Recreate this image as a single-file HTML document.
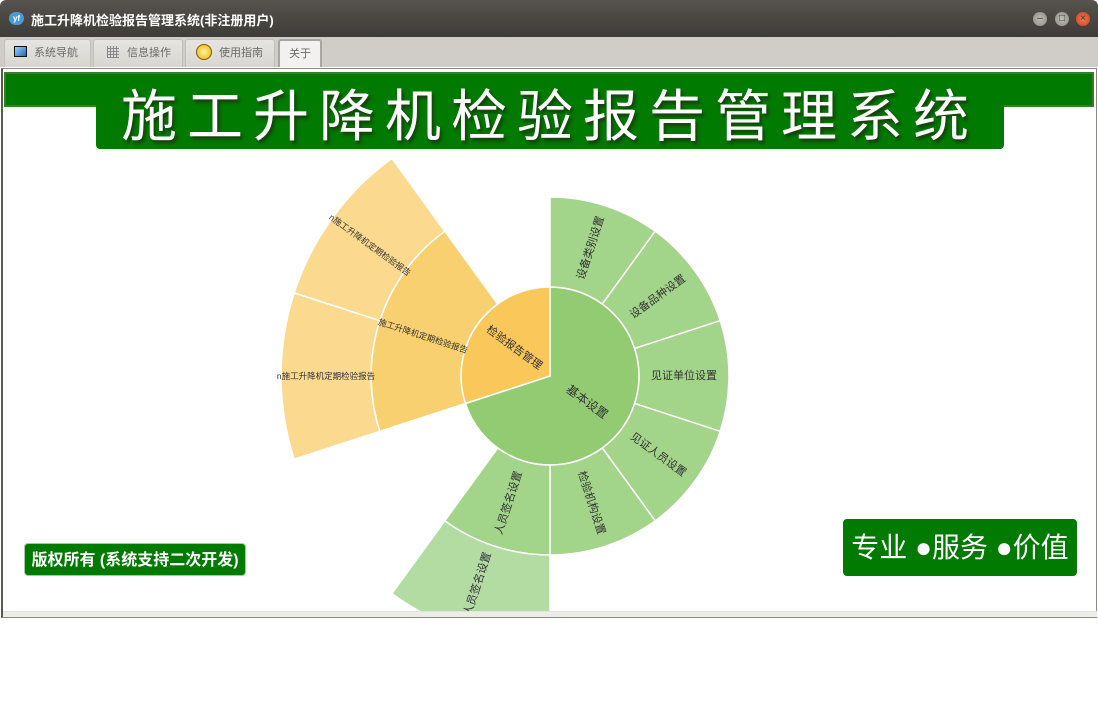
<!DOCTYPE html>
<html><head><meta charset="utf-8"><style>
*{margin:0;padding:0;box-sizing:border-box}
body{width:1098px;height:719px;background:#fff;position:relative;overflow:hidden;font-family:"Liberation Sans","Noto Sans CJK SC",sans-serif}
.tb{position:absolute;left:0;top:0;width:1098px;height:37px;background:linear-gradient(#57534e,#3e3c38);border-radius:6px 6px 0 0}
.tb .t{position:absolute;left:31px;top:10px;color:#fff;font-weight:bold;font-size:13px}
.logo{position:absolute;left:9px;top:12px;width:15px;height:13px;background:#4a9ad8;border-radius:7px;color:#fff;font-size:8px;font-weight:bold;text-align:center;line-height:13px}
.wb{position:absolute;top:12px;width:14px;height:14px;border-radius:7px;background:radial-gradient(#bdbdb8,#8d8b86);color:#333;font-size:10px;line-height:14px;text-align:center}
.tabs{position:absolute;left:0;top:37px;width:1098px;height:30px;background:#d0cdc8}
.tab{position:absolute;top:2px;height:28px;background:linear-gradient(#e6e4e0,#d8d6d1);border:1px solid #c3c0ba;border-bottom:none;border-radius:3px 3px 0 0;font-size:11px;color:#6a6a6a;line-height:26px}
.frame{position:absolute;left:1px;top:68px;width:1096px;height:550px;border:1px solid #8a8a80;border-left:2px solid #5a5a50;background:#fff}
.gbar{position:absolute;left:4px;top:72px;width:1090px;height:35px;background:#007a00;border:2px solid #3d7a2a}
.banner{position:absolute;left:96px;top:76px;width:908px;height:73px;background:#007a00;border-radius:4px;color:#fff;font-size:56px;letter-spacing:10px;text-align:center;line-height:82px;text-shadow:2px 3px 3px #1a3a10;padding-left:0}
.bot{position:absolute;left:3px;top:611px;width:1094px;height:6px;background:#ecece8;border-top:1px solid #dde8d8}
.b1{position:absolute;left:24px;top:543px;width:222px;height:33px;background:#007a00;border-radius:4px;color:#fff;font-size:16px;font-weight:bold;line-height:33px;text-align:center;border:1px solid #a8c8a0}
.b2{position:absolute;left:843px;top:519px;width:234px;height:57px;background:#007a00;border-radius:4px;color:#fff;font-size:28px;line-height:57px;text-align:center}
</style></head><body>
<div class="tb"><div class="logo">yf</div><div class="t">施工升降机检验报告管理系统(非注册用户)</div>
<div class="wb" style="left:1033px">–</div><div class="wb" style="left:1055px">□</div><div class="wb" style="left:1076px;background:radial-gradient(#f07a50,#c84020)">×</div></div>
<div class="tabs">
<div class="tab" style="left:4px;width:87px"><span style="display:inline-block;width:13px;height:11px;border:1px solid #111;background:linear-gradient(135deg,#9fd0f8,#1f6ab8);margin:0 7px 0 9px;vertical-align:-1px"></span>系统导航</div>
<div class="tab" style="left:93px;width:90px"><span style="display:inline-block;width:12px;height:12px;margin:0 8px 0 13px;vertical-align:-2px;background:repeating-linear-gradient(90deg,#888 0 1px,transparent 1px 3px),repeating-linear-gradient(0deg,#888 0 1px,transparent 1px 3px)"></span>信息操作</div>
<div class="tab" style="left:185px;width:90px"><span style="display:inline-block;width:16px;height:16px;border-radius:8px;background:radial-gradient(#fff2a0,#f0b000);border:1px solid #7a5a00;margin:0 7px 0 10px;vertical-align:-4px"></span>使用指南</div>
<div class="tab" style="left:278px;width:44px;background:#f2f1ef;border:2px solid #a8a6a2;border-bottom:none;text-align:center">关于</div>
</div>
<div class="frame"></div>
<div class="gbar"></div>
<div class="banner">施工升降机检验报告管理系统</div>
<svg width="1098" height="719" style="position:absolute;left:0;top:0" font-family="Liberation Sans, Noto Sans CJK SC, sans-serif">
<defs><clipPath id="c"><rect x="3" y="107" width="1093" height="504"/></clipPath></defs>
<g clip-path="url(#c)" stroke="#fff" stroke-width="1.5">
<path d="M550,376 L550,287 A89,89 0 1 1 465.4,403.5 Z" fill="#93cb73"/>
<path d="M550,376 L465.4,403.5 A89,89 0 0 1 550,287 Z" fill="#f9c75a"/>
<g fill="#a2d48a">
<path d="M550,287 L550,197 A179,179 0 0 1 655.2,231.2 L602.3,304 A89,89 0 0 0 550,287Z"/>
<path d="M602.3,304 L655.2,231.2 A179,179 0 0 1 720.2,320.7 L634.6,348.5 A89,89 0 0 0 602.3,304Z"/>
<path d="M634.6,348.5 L720.2,320.7 A179,179 0 0 1 720.2,431.3 L634.6,403.5 A89,89 0 0 0 634.6,348.5Z"/>
<path d="M634.6,403.5 L720.2,431.3 A179,179 0 0 1 655.2,520.8 L602.3,448 A89,89 0 0 0 634.6,403.5Z"/>
<path d="M602.3,448 L655.2,520.8 A179,179 0 0 1 550,555 L550,465 A89,89 0 0 0 602.3,448Z"/>
<path d="M550,465 L550,555 A179,179 0 0 1 444.8,520.8 L497.7,448 A89,89 0 0 0 550,465Z"/>
</g>
<path d="M550,555 L550,645 A269,269 0 0 1 391.9,593.6 L444.8,520.8 A179,179 0 0 0 550,555Z" fill="#b3dca3"/>
<path d="M465.4,403.5 L379.8,431.3 A179,179 0 0 1 444.8,231.2 L497.7,304 A89,89 0 0 0 465.4,403.5Z" fill="#f9d070"/>
<path d="M379.8,431.3 L294.2,459.1 A269,269 0 0 1 294.2,292.9 L379.8,320.7 A179,179 0 0 0 379.8,431.3Z" fill="#fbd98e"/>
<path d="M379.8,320.7 L294.2,292.9 A269,269 0 0 1 391.9,158.4 L444.8,231.2 A179,179 0 0 0 379.8,320.7Z" fill="#fbd98e"/>
</g>
<g fill="#333" font-size="11" text-anchor="middle" dominant-baseline="central" clip-path="url(#c)">
<text transform="translate(591,248) rotate(-72)">设备类别设置</text>
<text transform="translate(658,297) rotate(-36)">设备品种设置</text>
<text transform="translate(684,376)">见证单位设置</text>
<text transform="translate(658,455) rotate(36)">见证人员设置</text>
<text transform="translate(591,503) rotate(72)">检验机构设置</text>
<text transform="translate(509,503) rotate(-72)">人员签名设置</text>
<text transform="translate(478,584) rotate(-72)">人员签名设置</text>
<text transform="translate(587,402) rotate(36)" font-size="12">基本设置</text>
<text transform="translate(514,348) rotate(36)">检验报告管理</text>
<text transform="translate(423,336) rotate(18)" font-size="8.5">施工升降机定期检验报告</text>
<text transform="translate(370,245) rotate(36)" font-size="8.5">n施工升降机定期检验报告</text>
<text transform="translate(326,376)" font-size="8.5">n施工升降机定期检验报告</text>
</g>
</svg>
<div class="bot"></div>
<div class="b1">版权所有 (系统支持二次开发)</div>
<div class="b2">专业 ●服务 ●价值</div>
</body></html>
